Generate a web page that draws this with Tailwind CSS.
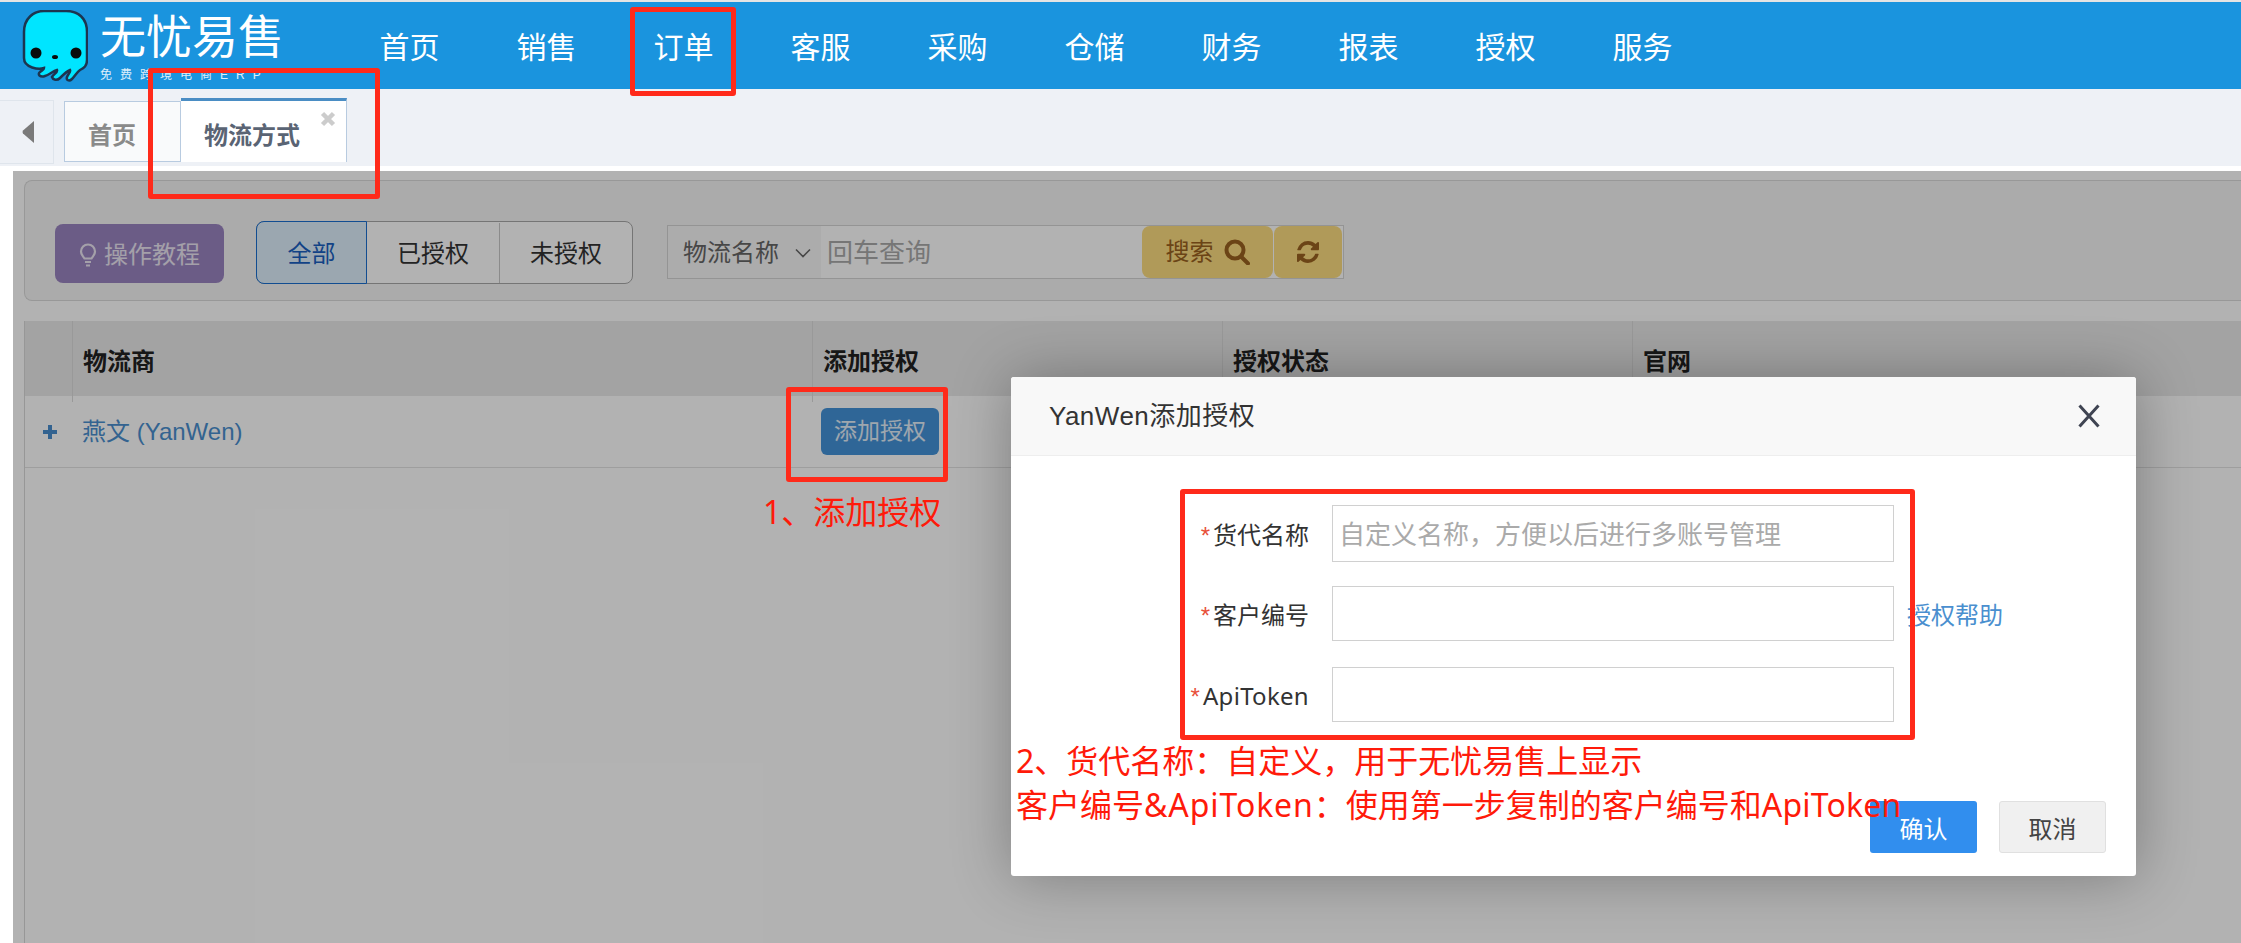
<!DOCTYPE html>
<html lang="zh-CN">
<head>
    <meta charset="UTF-8">
    <title>物流方式</title>
    <script src="https://cdn.jsdelivr.net/npm/@tailwindcss/browser@4"></script>
</head>
<body class="relative h-[943px] overflow-hidden bg-white text-[24px] text-[#333] font-['Liberation_Sans','Noto_Sans_CJK_SC',sans-serif]">

    <!-- Top bar -->
    <div class="h-[2px] bg-[#e4e4e4]"></div>
    <header class="flex h-[87px] bg-[#1a94de] text-white">
        <div class="flex items-start pl-[22px] pt-[8px]">
            <svg class="h-[72px] w-[66px]" viewBox="0 0 66 72">
                <path d="M2 22C2 8 12 1 22 1H44C56 1 65 8 65 22V50C65 56 62 58 58 60C55 62 53 66 50 69C47 72 44 70 45 67C46 64 49 62 48 60C45 61 42 64 38 68C35 71 31 70 30 67C32 64 36 62 35 60C31 61 27 65 23 66C18 68 15 64 18 62C20 60 22 60 22 58C17 60 2 58 2 48Z" fill="#00e5ff" stroke="#1c3550" stroke-width="2.5"/>
                <circle cx="14" cy="43" r="5.5" fill="#0a0a0a"/>
                <circle cx="54" cy="43" r="5.5" fill="#0a0a0a"/>
                <ellipse cx="33" cy="47" rx="3" ry="2" fill="#0a0a0a"/>
            </svg>
            <div class="ml-[12px] w-[190px]">
                <div class="mt-[2px] h-[50px] text-[46px] leading-[50px]">无忧易售</div>
                <div class="mt-[6px] text-[12px] leading-[14px] tracking-[8px] text-white/85">免费跨境电商ERP</div>
            </div>
        </div>
        <nav class="ml-[51px] flex text-[30px] leading-[91px]">
            <a class="w-[137px] text-center">首页</a>
            <a class="w-[137px] text-center">销售</a>
            <a class="w-[137px] text-center">订单</a>
            <a class="w-[137px] text-center">客服</a>
            <a class="w-[137px] text-center">采购</a>
            <a class="w-[137px] text-center">仓储</a>
            <a class="w-[137px] text-center">财务</a>
            <a class="w-[137px] text-center">报表</a>
            <a class="w-[137px] text-center">授权</a>
            <a class="w-[137px] text-center">服务</a>
        </nav>
    </header>

    <!-- Tabs -->
    <div class="flex h-[77px] items-start bg-[#eef1f6] pt-[11px]">
        <div class="flex h-[64px] w-[54px] items-center justify-center border border-l-0 border-[#dfe5ec] pl-[2px]">
            <svg class="h-[22px] w-[12px]" viewBox="0 0 12 22"><path d="M12 0V22L1 12.5Q0 11 1 9.5Z" fill="#7a7a7a"/></svg>
        </div>
        <div class="ml-[10px] mt-[1px] flex h-[61px] w-[117px] items-center border border-[#b8cbe0] bg-[#f9fafb] pl-[23px] pt-[8px] font-bold text-[#8a8a8a]">首页</div>
        <div class="relative -mt-[2px] flex h-[64px] w-[166px] items-center border-t-[3px] border-r border-t-[#4a8dc4] border-r-[#b8cbe0] bg-white pl-[23px] pt-[8px] font-bold text-[#5a6474]">
            物流方式
            <svg class="absolute right-[10px] top-[10px] h-[16px] w-[16px]" viewBox="0 0 16 16"><path d="M2.5 2.5L13.5 13.5M13.5 2.5L2.5 13.5" stroke="#cccccc" stroke-width="4.5"/></svg>
        </div>
    </div>

    <!-- Page content -->
    <main class="relative h-[777px] pl-[24px] pt-[14px]">
        <div class="flex h-[121px] items-start rounded-l-[8px] border border-r-0 border-[#dadada] bg-[#f5f5f5] pl-[30px] pt-[40px]">
            <button class="mt-[3px] flex h-[59px] w-[169px] items-center justify-center gap-[7px] rounded-[8px] bg-[#9a84c1] pt-[2px] text-white/80">
                <svg class="h-[24px] w-[18px]" viewBox="0 0 18 24" fill="none" stroke="#fff" stroke-opacity=".8" stroke-width="2.2"><path d="M5.5 15.5C4 13 2 11.5 2 8.5A7 7 0 0 1 16 8.5C16 11.5 14 13 12.5 15.5Z"/><path d="M6 19H12M7 22.5H11"/></svg>
                操作教程
            </button>
            <div class="ml-[32px] flex h-[63px] w-[377px] rounded-[8px] border border-[#a8a8a8] bg-white pt-px">
                <div class="-mb-px -ml-px -mt-[2px] flex w-[111px] items-center justify-center rounded-l-[8px] border border-[#1b6fd0] bg-[#dfeffc] pt-[2px] text-[#1a5fc0]">全部</div>
                <div class="flex w-[133px] items-center justify-center border-r border-[#c8c8c8] pt-[2px]">已授权</div>
                <div class="flex flex-1 items-center justify-center pt-[2px]">未授权</div>
            </div>
            <div class="ml-[34px] mt-[4px] flex h-[54px] w-[677px] border border-[#d4d4d4] bg-white">
                <div class="flex w-[153px] items-center bg-[#f7f7f7] pl-[15px] pt-[2px] text-[#666]">
                    物流名称
                    <svg class="ml-[16px] h-[10px] w-[16px]" viewBox="0 0 16 10" fill="none" stroke="#666" stroke-width="1.6"><path d="M1 1.5L8 8.5L15 1.5"/></svg>
                </div>
                <div class="flex flex-1 items-center pl-[6px] pt-[2px] text-[26px] text-[#aaa]">回车查询</div>
                <button class="flex w-[131px] items-center justify-center gap-[10px] rounded-[8px] bg-[#fddd80] text-[#9a6220]">
                    搜索
                    <svg class="h-[26px] w-[26px]" viewBox="0 0 26 26" fill="none" stroke="#9a6220" stroke-width="4"><circle cx="11" cy="11" r="8.5"/><path d="M17 17.5L24 24.5" stroke-linecap="round"/></svg>
                </button>
                <button class="ml-[1px] mr-[1px] flex w-[68px] items-center justify-center rounded-[8px] bg-[#fddd80]">
                    <svg class="h-[22px] w-[22px]" viewBox="0 0 1536 1536" fill="#9a6220"><path d="M1511 928q0 5-1 7-64 268-268 434.5t-478 166.5q-146 0-282.5-55t-243.5-157l-129 129q-19 19-45 19t-45-19-19-45v-448q0-26 19-45t45-19h448q26 0 45 19t19 45-19 45l-137 137q71 66 161 102t187 36q134 0 250-65t186-179q11-17 53-117 8-23 30-23h192q13 0 22.5 9.5t9.5 22.5zm25-800v448q0 26-19 45t-45 19h-448q-26 0-45-19t-19-45 19-45l138-138q-148-137-349-137-134 0-250 65t-186 179q-11 17-53 117-8 23-30 23h-199q-13 0-22.5-9.5t-9.5-22.5v-7q65-268 270-434.5t480-166.5q146 0 284 55.5t245 156.5l130-129q19-19 45-19t45 19 19 45z"/></svg>
                </button>
            </div>
        </div>

        <div class="mt-[20px] h-[622px] border-l border-[#d8d8d8]">
            <div class="grid h-[75px] grid-cols-[47px_740px_410px_410px_1fr] bg-[#eaeaea] font-bold leading-[81px] text-[#222]">
                <div></div>
                <div class="border-l border-[#dcdcdc] pl-[10px]">物流商</div>
                <div class="border-l border-[#dcdcdc] pl-[10px]">添加授权</div>
                <div class="border-l border-[#dcdcdc] pl-[10px]">授权状态</div>
                <div class="border-l border-[#dcdcdc] pl-[10px]">官网</div>
            </div>
            <div class="grid h-[72px] grid-cols-[47px_740px_1fr] items-center border-b border-[#e2e2e2]">
                <svg class="ml-[17px] h-[16px] w-[16px]" viewBox="0 0 16 16"><path d="M8 1V15M1 8H15" stroke="#4a8fcf" stroke-width="4"/></svg>
                <div class="pl-[10px] text-[#4a8fcf]">燕文 (YanWen)</div>
                <div class="pl-[9px]"><button class="h-[47px] w-[118px] rounded-[6px] bg-[#4492d8] text-[23px] text-white/85">添加授权</button></div>
            </div>
        </div>

        <!-- Backdrop -->
        <div class="absolute inset-0 left-[13px] top-[5px] bg-black/30"></div>
    </main>

    <!-- Dialog -->
    <div class="absolute left-[1011px] top-[377px] h-[499px] w-[1125px] rounded-[3px] bg-white shadow-[1px_1px_60px_rgba(0,0,0,.3)]">
        <div class="flex h-[79px] items-center justify-between rounded-t-[3px] border-b border-[#eeeeee] bg-[#f8f8f8] pl-[38px] pr-[36px]">
            <span class="text-[26px] tracking-[0.5px]">YanWen添加授权</span>
            <svg class="h-[24px] w-[22px]" viewBox="0 0 22 24" fill="none" stroke="#3f4452" stroke-width="3"><path d="M1.5 1.5L20.5 22.5M20.5 1.5L1.5 22.5"/></svg>
        </div>
        <div class="pt-[49px]">
            <div class="flex h-[57px] items-center">
                <label class="w-[298px] pt-[4px] text-right"><span class="mr-[3px] text-[24px] text-[#e8503a]">*</span>货代名称</label>
                <div class="ml-[23px] flex h-full w-[562px] items-center border border-[#d0d0d0] pl-[6px] pt-[3px] text-[26px] text-[#aaa]">自定义名称，方便以后进行多账号管理</div>
            </div>
            <div class="mt-[24px] flex h-[55px] items-center">
                <label class="w-[298px] pt-[4px] text-right"><span class="mr-[3px] text-[24px] text-[#e8503a]">*</span>客户编号</label>
                <div class="ml-[23px] h-full w-[562px] border border-[#d0d0d0]"></div>
                <a class="ml-[13px] pt-[4px] text-[#4a8fcf]">授权帮助</a>
            </div>
            <div class="mt-[26px] flex h-[55px] items-center">
                <label class="w-[298px] pt-[4px] text-right"><span class="mr-[3px] text-[24px] text-[#e8503a]">*</span><span class="font-['Noto_Sans'] tracking-[0.3px]">ApiToken</span></label>
                <div class="ml-[23px] h-full w-[562px] border border-[#d0d0d0]"></div>
            </div>
            <div class="mt-[79px] flex justify-end gap-[22px] pr-[30px]">
                <button class="h-[52px] w-[107px] rounded-[3px] bg-[#318eee] pt-[5px] text-white">确认</button>
                <button class="h-[52px] w-[107px] rounded-[3px] border border-[#e0e0e0] bg-[#f0f0f0] pt-[5px] text-[#444]">取消</button>
            </div>
        </div>
    </div>

    <!-- Red annotations -->
    <div class="absolute left-[630px] top-[7px] h-[89px] w-[106px] rounded-[3px] border-[5px] border-[#ff2a1a]"></div>
    <div class="absolute left-[148px] top-[68px] h-[131px] w-[232px] rounded-[3px] border-[5px] border-[#ff2a1a]"></div>
    <div class="absolute left-[786px] top-[387px] h-[95px] w-[162px] rounded-[3px] border-[5px] border-[#ff2a1a]"></div>
    <div class="absolute left-[1180px] top-[489px] h-[251px] w-[735px] rounded-[3px] border-[5px] border-[#ff2a1a]"></div>
    <div class="absolute left-[763px] top-[490px] text-[32px] leading-[44px] text-[#ff1a0a] font-['Noto_Sans','Noto_Sans_CJK_SC',sans-serif]">1、添加授权</div>
    <div class="absolute left-[1016px] top-[739px] text-[32px] leading-[44px] text-[#ff1a0a] font-['Noto_Sans','Noto_Sans_CJK_SC',sans-serif]">
        <div>2、货代名称：自定义，用于无忧易售上显示</div>
        <div>客户编号<span class="tracking-[0.9px]">&amp;ApiToken</span>：使用第一步复制的客户编号和<span class="tracking-[0.2px]">ApiToken</span></div>
    </div>
</body>
</html>
